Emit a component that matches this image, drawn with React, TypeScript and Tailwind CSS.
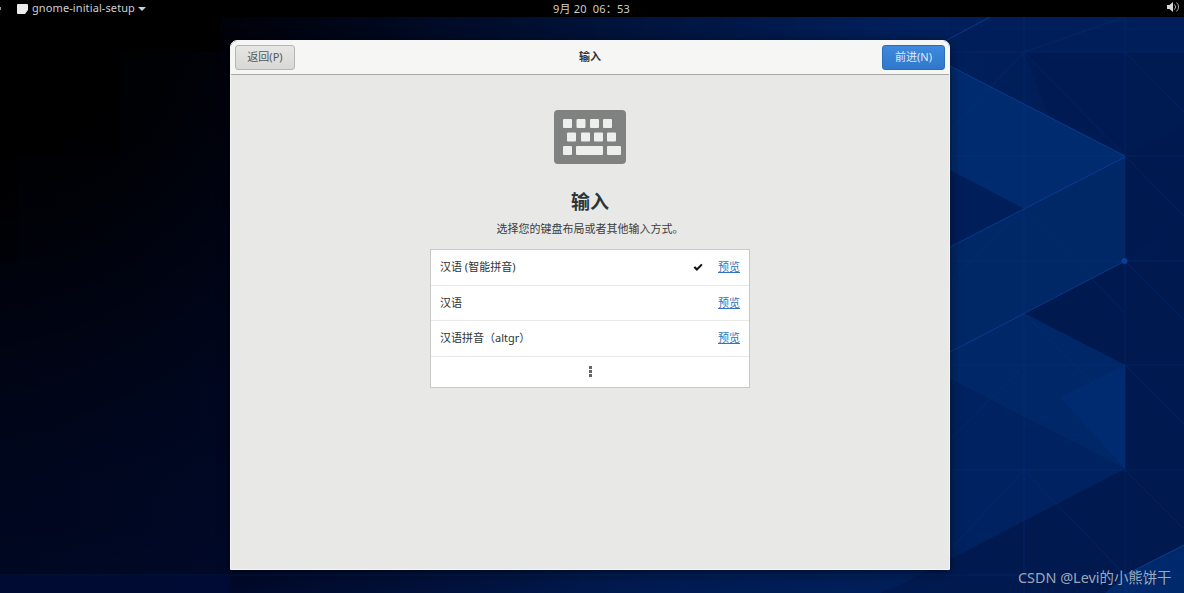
import React from "react";

const cjk = { fontFamily: '"Noto Sans", "Noto Sans CJK SC", sans-serif' };

function Wallpaper() {
  return (
    <svg className="absolute inset-0" width="1184" height="593" viewBox="0 0 1184 593">
      <defs>
        <linearGradient id="base" x1="0" y1="0" x2="1184" y2="0" gradientUnits="userSpaceOnUse">
          <stop offset="0" stopColor="#000a30" />
          <stop offset="0.2" stopColor="#000c38" />
          <stop offset="0.5" stopColor="#001a50" />
          <stop offset="0.8" stopColor="#00205c" />
          <stop offset="1" stopColor="#001a50" />
        </linearGradient>
        <radialGradient id="dark" cx="0" cy="0" r="880" gradientUnits="userSpaceOnUse">
          <stop offset="0" stopColor="#000" stopOpacity="1" />
          <stop offset="0.2" stopColor="#000" stopOpacity="0.92" />
          <stop offset="0.5" stopColor="#000" stopOpacity="0.45" />
          <stop offset="1" stopColor="#000" stopOpacity="0" />
        </radialGradient>
      </defs>
      <rect width="1184" height="593" fill="url(#base)" />
      <polygon points="950,17 1184,17 1184,52 1125,52 1050,90 950,40" fill="#001f5a" />
      <polygon points="1024,52 1125,52 1125,156 1050,118" fill="#001a54" />
      <polygon points="1125,52 1184,52 1184,125 1125,156" fill="#001a52" />
      <polygon points="1125,156 1184,125 1184,210 1125,261" fill="#001a50" />
      <polygon points="1125,261 1184,261 1184,593 1125,593" fill="#001a50" />
      <polygon points="1125,365 1184,335 1184,593 1125,593" fill="#00194e" />
      <polygon points="900,40 1125,156 900,272" fill="#002a6c" />
      <polygon points="950,66 1125,156 1125,261 950,170" fill="#002b6e" />
      <polygon points="950,170 1024,209 950,247" fill="#001e5a" />
      <polygon points="950,247 1125,157 1125,261 950,352" fill="#002766" />
      <polygon points="1024,313 1125,261 1125,365" fill="#001a50" />
      <polygon points="950,352 1024,313 1125,365 1125,469 950,379" fill="#002868" />
      <polygon points="1060,397 1125,365 1125,469" fill="#002b70" />
      <polygon points="950,379 1125,469 950,560" fill="#002260" />
      <polygon points="900,585 1125,469 1125,593 880,593" fill="#001a50" />
      <polygon points="1125,575 1184,545 1184,593 1105,593" fill="#00296c" />
      <rect width="1184" height="593" fill="url(#dark)" />
      <g stroke="#0a3a88" strokeWidth="1" fill="none" opacity="0.3">
        <path d="M1024 17V593M1125 17V593" />
        <path d="M950 52H1184M950 156H1184M950 261H1184M950 365H1184M950 470H1184M0 575H1184" />
        <path d="M1125 52L1184 112M1125 156L1184 216M1125 261L1184 320M1125 365L1184 424M1125 470L1184 529" />
        <path d="M1024 52L1125 156M1024 209L1125 313M1024 313L1125 417M1024 470L1125 575" />
        <path d="M950 130L1024 52L1125 17M950 283L1024 209M950 440L1024 365M950 550L1024 470" />
      </g>
      <g stroke="#0a429a" strokeWidth="1" fill="none" opacity="0.8">
        <path d="M947 40L990 17" />
        <path d="M950 66L1125 156" />
        <path d="M950 247L1125 157" />
        <path d="M950 352L1125 261" />
      </g>
      <circle cx="1124.5" cy="261" r="3" fill="#0a3f96" />
      <path d="M1125 575L1184 545" stroke="#0a46a0" opacity="0.8" />
      <g fill="#000">
        <rect x="0" y="17" width="220" height="35" />
        <rect x="0" y="52" width="120" height="104" opacity="0.5" />
        <rect x="0" y="156" width="18" height="105" opacity="0.4" />
      </g>
      <rect x="0" y="575" width="230" height="18" fill="#000c38" opacity="0.8" />
    </svg>
  );
}

function KeyboardIcon() {
  return (
    <svg width="72" height="54" viewBox="0 0 72 54">
      <rect x="0" y="0" width="72" height="54" rx="4" fill="#808281" />
      <g fill="#eeeeec">
        <rect x="9" y="9" width="9" height="9" rx="1" />
        <rect x="22.5" y="9" width="9" height="9" rx="1" />
        <rect x="36" y="9" width="9" height="9" rx="1" />
        <rect x="49" y="9" width="9" height="9" rx="1" />
        <rect x="13" y="22.5" width="9" height="9" rx="1" />
        <rect x="27" y="22.5" width="9" height="9" rx="1" />
        <rect x="40" y="22.5" width="9" height="9" rx="1" />
        <rect x="53" y="22.5" width="9" height="9" rx="1" />
        <rect x="9" y="36" width="9" height="9" rx="1" />
        <rect x="22" y="36" width="27" height="9" rx="1" />
        <rect x="53" y="36" width="14" height="9" rx="1" />
      </g>
    </svg>
  );
}

function Row({ label, checked }: { label: string; checked?: boolean }) {
  return (
    <div className="flex h-[35.5px] items-center border-b border-[#e8e8e7] pl-[9px] pr-[9px] text-[11px] text-[#2e3436]">
      <span className="flex-1">{label}</span>
      {checked && (
        <svg className="mr-[15px]" width="10" height="9" viewBox="0 0 10 9">
          <path d="M0.5 4.6L2.3 3.2L3.9 5L8.2 0.8L9.6 2L3.9 8Z" fill="#111" />
        </svg>
      )}
      <span className="text-[#2f74c0] underline">预览</span>
    </div>
  );
}

export default function App() {
  return (
    <div className="relative h-[593px] w-[1184px] overflow-hidden bg-black" style={cjk}>
      <Wallpaper />

      <div className="relative flex h-[17px] items-center bg-black text-[11px] text-[#cfcfcf]">
        <span className="h-[3px] w-px bg-[#999]" />
        <svg className="ml-4" width="11" height="10" viewBox="0 0 11 10">
          <path d="M1 0H10A1 1 0 0 1 11 1V6L8 10H1A1 1 0 0 1 0 9V1A1 1 0 0 1 1 0Z" fill="#ececec" />
        </svg>
        <span className="ml-[4px] tracking-[0.1px]">gnome-initial-setup</span>
        <svg className="ml-[3px]" width="8" height="4" viewBox="0 0 8 4">
          <path d="M0 0H8L4 4Z" fill="#cfcfcf" />
        </svg>
        <span className="absolute left-[553px] top-0 text-[11px] leading-[17px] tracking-[0.2px]">9月 20&nbsp; 06：53</span>
        <svg className="absolute left-[1167px] top-[1px]" width="13" height="12" viewBox="0 0 13 12">
          <path d="M0 4H2.5L6 1V11L2.5 8H0Z" fill="#d8d8d8" />
          <path d="M7.5 3.5A3.5 3.5 0 0 1 7.5 8.5M9.5 1.5A6 6 0 0 1 9.5 10.5" stroke="#a8a8a8" strokeWidth="1" fill="none" />
        </svg>
      </div>

      <div className="relative pt-[24px] pl-[231px]">
        <div className="flex h-[528px] w-[718px] flex-col overflow-hidden rounded-t-[6px] bg-[#e8e8e7] shadow-[0_2px_14px_rgba(0,0,0,0.6)] outline outline-1 outline-[#f5f5f5]">
          <div className="flex h-[34px] items-center justify-between border-b border-[#a9a9a6] bg-[#f6f6f5] pb-[1px] pl-[4px] pr-[4px] text-[11px]">
            <button className="flex h-[25px] w-[60px] items-center justify-center rounded-[3px] border border-[#b5b5b1] bg-gradient-to-b from-[#e6e6e4] to-[#d8d8d5] text-[#55585a]">
              返回(P)
            </button>
            <span className="ml-[3px] font-bold text-[#333]">输入</span>
            <button className="flex h-[25px] w-[63px] items-center justify-center rounded-[3px] border border-[#2a6cb5] bg-gradient-to-b from-[#3f8ade] to-[#2f78cc] text-[#dfe9f5]">
              前进(N)
            </button>
          </div>

          <div className="flex flex-col items-center pt-[35px]">
            <KeyboardIcon />
            <div className="mt-[24px] text-[19px] leading-[28px] font-bold text-[#2e3436]">输入</div>
            <div className="mt-[5px] text-[11px] leading-[16px] text-[#3a3d3e]">选择您的键盘布局或者其他输入方式。</div>
            <div className="mt-[12px] w-[320px] border border-[#c8c8c6] bg-white">
              <Row label="汉语 (智能拼音)" checked />
              <Row label="汉语" />
              <Row label="汉语拼音（altgr）" />
              <div className="flex h-[30px] flex-col items-center justify-center gap-[1px]">
                <span className="h-[3px] w-[3px] bg-[#666]" />
                <span className="h-[3px] w-[3px] bg-[#666]" />
                <span className="h-[3px] w-[3px] bg-[#666]" />
              </div>
            </div>
          </div>
        </div>
      </div>

      <div className="absolute left-[1018px] top-[568px] text-[14.4px] leading-[20px] text-[#c8ccd4]/80">CSDN @Levi的小熊饼干</div>
    </div>
  );
}
